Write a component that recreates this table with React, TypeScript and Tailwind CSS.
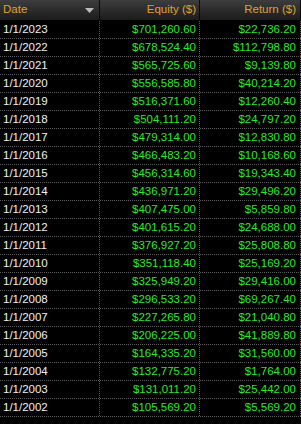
import React from "react";

const rows: [string, string, string][] = [
  ["1/1/2023", "$701,260.60", "$22,736.20"],
  ["1/1/2022", "$678,524.40", "$112,798.80"],
  ["1/1/2021", "$565,725.60", "$9,139.80"],
  ["1/1/2020", "$556,585.80", "$40,214.20"],
  ["1/1/2019", "$516,371.60", "$12,260.40"],
  ["1/1/2018", "$504,111.20", "$24,797.20"],
  ["1/1/2017", "$479,314.00", "$12,830.80"],
  ["1/1/2016", "$466,483.20", "$10,168.60"],
  ["1/1/2015", "$456,314.60", "$19,343.40"],
  ["1/1/2014", "$436,971.20", "$29,496.20"],
  ["1/1/2013", "$407,475.00", "$5,859.80"],
  ["1/1/2012", "$401,615.20", "$24,688.00"],
  ["1/1/2011", "$376,927.20", "$25,808.80"],
  ["1/1/2010", "$351,118.40", "$25,169.20"],
  ["1/1/2009", "$325,949.20", "$29,416.00"],
  ["1/1/2008", "$296,533.20", "$69,267.40"],
  ["1/1/2007", "$227,265.80", "$21,040.80"],
  ["1/1/2006", "$206,225.00", "$41,889.80"],
  ["1/1/2005", "$164,335.20", "$31,560.00"],
  ["1/1/2004", "$132,775.20", "$1,764.00"],
  ["1/1/2003", "$131,011.20", "$25,442.00"],
  ["1/1/2002", "$105,569.20", "$5,569.20"],
];

export default function App() {
  return (
    <div
      className="w-[301px] h-[424px] bg-black overflow-hidden text-[11.5px] leading-none"
      style={{ fontFamily: '"Liberation Sans", Arial, sans-serif' }}
    >
      <div className="flex h-[21px] border-b border-black bg-gradient-to-b from-[#3d3d3d] to-[#1c1c1c] text-[#e0a02c]">
        <div className="w-[100px] flex items-center justify-between pl-[3px] pr-[5px] border-r border-[#0a0a0a]">
          <span>Date</span>
          <svg width="9" height="5" viewBox="0 0 9 5">
            <polygon points="0,0 9,0 4.5,5" fill="#bdbdbd" />
          </svg>
        </div>
        <div className="w-[100px] flex items-center justify-end pr-[3px] border-r border-[#0a0a0a]">
          Equity ($)
        </div>
        <div className="w-[101px] flex items-center justify-end pr-[4px] border-r border-[#0a0a0a]">
          Return ($)
        </div>
      </div>
      {rows.map((r) => (
        <div key={r[0]} className="flex h-[18px] border-b border-dotted border-[#5c5c5c]">
          <div className="w-[100px] flex items-center pl-[3px] border-r border-dotted border-[#5c5c5c] text-[#f0f0f0]">
            {r[0]}
          </div>
          <div className="w-[100px] flex items-center justify-end pr-[3px] border-r border-dotted border-[#5c5c5c] text-[#22ee22]">
            {r[1]}
          </div>
          <div className="w-[101px] flex items-center justify-end pr-[4px] border-r border-dotted border-[#5c5c5c] text-[#22ee22]">
            {r[2]}
          </div>
        </div>
      ))}
    </div>
  );
}
